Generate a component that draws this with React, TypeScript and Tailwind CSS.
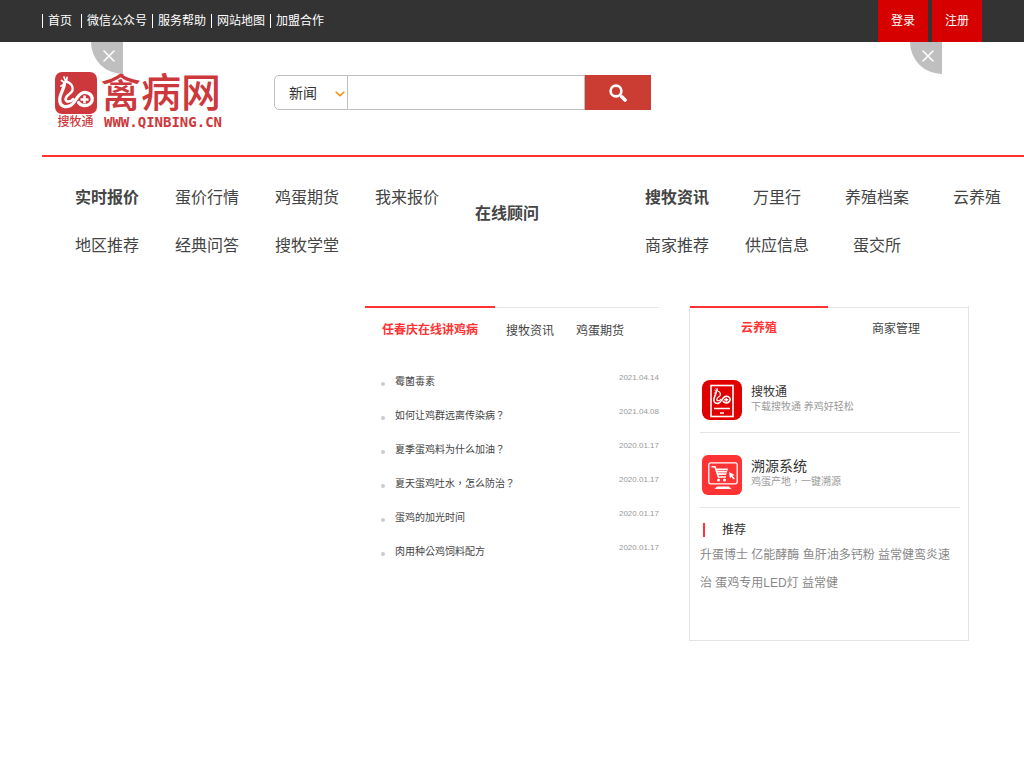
import React, { useState } from 'react'

const topLinks: string[] = ["首页", "微信公众号", "服务帮助", "网站地图", "加盟合作"]

const leftNav: string[] = ["实时报价", "蛋价行情", "鸡蛋期货", "我来报价", "地区推荐", "经典问答", "搜牧学堂"]
const rightNav: string[] = ["搜牧资讯", "万里行", "养殖档案", "云养殖", "商家推荐", "供应信息", "蛋交所"]

const newsTabs: string[] = ["任春庆在线讲鸡病", "搜牧资讯", "鸡蛋期货"]

const news = [
    { title: "霉菌毒素", date: "2021.04.14" },
    { title: "如何让鸡群远离传染病？", date: "2021.04.08" },
    { title: "夏季蛋鸡料为什么加油？", date: "2020.01.17" },
    { title: "夏天蛋鸡吐水，怎么防治？", date: "2020.01.17" },
    { title: "蛋鸡的加光时间", date: "2020.01.17" },
    { title: "肉用种公鸡饲料配方", date: "2020.01.17" },
]

// rooster whose tail curls into a ring with a medical cross
const Rooster = () => (
    <g fill="none" stroke="currentColor" strokeLinecap="round" strokeLinejoin="round">
        <path strokeWidth="3.2" d="M9.5 11C9.500 17 4.500 22 4.700 28C4.700 34 10 36 15 33.800C20 31.500 21 25 25.500 22C30 18.800 36.500 21 37.200 26C37.800 31 33 34.500 28 33.500C26 33 24.500 32 23.500 30.500" />
        <path strokeWidth="2.400" d="M11 9.500C16 10.500 18.500 14.500 17.500 18.500C16 22.500 10.500 22.500 10.500 27.500C11.500 30.500 16 30 18 27" />
        <path strokeWidth="1.800" d="M9 5L10.500 9M6.500 8.500L9.500 10.500M6 14L9 12.500M12 5.500L11.500 9.500" />
        <path strokeWidth="2.600" strokeLinecap="butt" d="M29.500 23.500V31.500M25.500 27.500H33.500" />
    </g>
)

const Logo = () => (
    <a href="#" aria-label="禽病网" className="flex gap-1 text-[#cd383d]">
        <span className="flex w-[43px] flex-col items-center">
            <svg viewBox="0 0 42 42" className="size-[42px]">
                <rect width="42" height="42" rx="7" fill="currentColor" />
                <g className="text-white"><Rooster /></g>
            </svg>
            <span className="text-xs font-medium leading-4">搜牧通</span>
        </span>
        <span className="flex w-[124px] flex-col">
            <span className="text-[40px] font-medium leading-[42px]">禽病网</span>
            <span className="pl-[3px] font-['DejaVu_Sans_Mono',monospace] text-sm font-bold leading-4">WWW.QINBING.CN</span>
        </span>
    </a>
)

const CloseCorner = ({ className }: { className: string }) => (
    <button aria-label="关闭" className={`absolute top-[42px] flex size-8 justify-center rounded-bl-full bg-[#bfbfbf] pt-2 pl-1 ${className}`}>
        <svg viewBox="0 0 12 12" className="size-3" stroke="white" strokeWidth="1.600" strokeLinecap="round">
            <path d="M1 1L11 11M11 1L1 11" />
        </svg>
    </button>
)

const NavGroup = ({ items }: { items: string[] }) => (
    <ul className="grid shrink-0 grid-cols-[repeat(4,100px)] text-center leading-[48px]">
        {items.map((item, i) => (
            <li key={item}><a href="#" className={i === 0 ? "font-bold" : ""}>{item}</a></li>
        ))}
    </ul>
)

const App = () => {

    const [newsTab, setNewsTab] = useState(0)
    const [sideTab, setSideTab] = useState(0)

    return (
        <main className="relative min-h-screen overflow-x-hidden bg-white font-['Liberation_Sans','Noto_Sans_CJK_SC',sans-serif] text-[#444]">
            <div className="flex h-[42px] justify-between bg-[#333] px-[42px] text-xs text-white">
                <ul className="flex items-center">
                    {topLinks.map((link, i) => (
                        <li key={link} className={`border-l border-white leading-[14px] ${i === 0 ? "pl-[5px] pr-[9px]" : "px-[5px]"}`}>
                            <a href="#">{link}</a>
                        </li>
                    ))}
                </ul>
                <div className="flex gap-1 leading-[42px]">
                    <a href="#" className="w-[50px] bg-[#d70000] text-center">登录</a>
                    <a href="#" className="w-[50px] bg-[#d70000] text-center">注册</a>
                </div>
            </div>

            <CloseCorner className="left-[91px]" />
            <CloseCorner className="right-[82px]" />

            <header className="ml-[42px] flex h-[115px] items-start border-b-2 border-[#f33] pl-3 pt-[30px]">
                <Logo />
                <form className="ml-[49px] mt-[3px] flex h-[35px]">
                    <label className="relative flex">
                        <select aria-label="分类" className="w-[74px] appearance-none rounded-l-[5px] border border-[#bfbfbf] bg-white pl-[14px] text-sm text-[#333]">
                            <option>新闻</option>
                            <option>问答</option>
                        </select>
                        <svg viewBox="0 0 10 6" className="pointer-events-none absolute right-[3px] top-4 h-[6px] w-[10px]" fill="none" stroke="#f80" strokeWidth="1.500">
                            <path d="M0.700 0.700L5 4.800L9.300 0.700" />
                        </svg>
                    </label>
                    <input type="text" aria-label="搜索" className="w-[237px] border-y border-r border-[#bfbfbf] px-2 text-sm outline-none" />
                    <button type="button" aria-label="搜索" className="flex w-[66px] items-center justify-center bg-[#cb3d33]">
                        <svg viewBox="0 0 18 18" className="size-[18px]" fill="none" stroke="white" strokeLinecap="round">
                            <circle cx="7" cy="7" r="5.400" strokeWidth="2.600" />
                            <path d="M12.800 12.800L16 16" strokeWidth="3.600" />
                        </svg>
                    </button>
                </form>
            </header>

            <nav className="ml-[57px] mt-[17px] flex">
                <NavGroup items={leftNav} />
                <a href="#" className="mr-[70px] w-[100px] shrink-0 pt-4 text-center font-bold leading-[48px]">在线顾问</a>
                <NavGroup items={rightNav} />
            </nav>

            <div className="mt-9 flex items-start justify-end gap-[30px] pr-[55px]">
                <section className="w-[294px]">
                    <div className="flex text-xs">
                        {newsTabs.map((tab, i) => (
                            <button
                                key={tab}
                                onClick={() => setNewsTab(i)}
                                className={`h-[46px] ${i === 0 ? "w-[130px]" : i === 1 ? "w-[70px]" : "w-[94px] pr-6"} ${newsTab === i ? "border-t-2 border-[#f33] font-bold text-[#f33]" : "mt-px border-t border-[#e3e3e3]"}`}
                            >
                                {tab}
                            </button>
                        ))}
                    </div>
                    <ul className="mt-[10px] pl-4">
                        {news.map((item) => (
                            <li key={item.title} className="flex h-[34px] items-center text-[10px]">
                                <span className="mr-[10px] mt-2 size-1 rounded-full bg-[#ccc]"></span>
                                <a href="#" className="font-['Noto_Sans_CJK_TC',sans-serif]">{item.title}</a>
                                <span className="mb-1 ml-auto text-[8px] text-[#999]">{item.date}</span>
                            </li>
                        ))}
                    </ul>
                </section>

                <section className="w-[280px] border-x border-b border-[#e3e3e3] pb-[43px]">
                    <div className="flex text-xs">
                        {["云养殖", "商家管理"].map((tab, i) => (
                            <button
                                key={tab}
                                onClick={() => setSideTab(i)}
                                className={`h-[42px] ${i === 0 ? "w-[138px]" : "flex-1 pr-1"} ${sideTab === i ? "border-t-2 border-[#f33] font-bold text-[#f33]" : "mt-px border-t border-[#e3e3e3]"}`}
                            >
                                {tab}
                            </button>
                        ))}
                    </div>

                    <div className="pl-[10px] pr-2">
                        <a href="#" className="mt-[31px] flex gap-[9px] border-b border-[#e3e3e3] pb-3 pl-[2px]">
                            <svg viewBox="0 0 40 40" className="size-10 text-white">
                                <rect width="40" height="40" rx="8" fill="#e10000" />
                                <rect x="9" y="5.500" width="22" height="31" fill="none" stroke="currentColor" strokeWidth="1.600" />
                                <g transform="translate(9.500 6) scale(0.500)"><Rooster /></g>
                                <path d="M12 28.500H28M18 33H22" stroke="currentColor" strokeWidth="1.600" />
                            </svg>
                            <span className="flex flex-col pt-1">
                                <span className="text-xs leading-4 text-[#333]">搜牧通</span>
                                <span className="text-[10px] leading-[14px] text-[#999]">下载搜牧通 养鸡好轻松</span>
                            </span>
                        </a>
                        <a href="#" className="mt-[22px] flex gap-[9px] border-b border-[#e3e3e3] pb-3 pl-[2px]">
                            <svg viewBox="0 0 40 40" className="size-10">
                                <rect width="40" height="40" rx="6" fill="#f33" />
                                <rect x="6.800" y="7.800" width="28.400" height="21" rx="2" fill="none" stroke="white" strokeWidth="1.300" />
                                <path d="M15 31.500H27L29.500 34H12.500Z" fill="white" />
                                <path d="M9.500 11.800H13L16.500 22H24" fill="none" stroke="white" strokeWidth="1.600" />
                                <path d="M13.500 13.500H26L24 20H16Z" fill="white" />
                                <path d="M15.500 15.500H25M16 17.800H24.500" stroke="#f33" strokeWidth="0.700" />
                                <circle cx="16.500" cy="25" r="1.500" fill="white" />
                                <circle cx="22.500" cy="25" r="1.500" fill="white" />
                                <path d="M27 17L32.500 20L30.500 20.800L32.800 23.500L31.500 24.500L29.300 21.800L28 23.500Z" fill="white" />
                            </svg>
                            <span className="flex flex-col pt-[3px]">
                                <span className="text-sm leading-4 text-[#333]">溯源系统</span>
                                <span className="font-['Noto_Sans_CJK_TC',sans-serif] text-[10px] leading-[14px] text-[#999]">鸡蛋产地，一键溯源</span>
                            </span>
                        </a>
                        <h2 className="ml-[3px] mt-[15px] border-l-2 border-[#f33] pl-[17px] text-xs leading-[14px] text-[#333]">推荐</h2>
                        <p className="mt-1 text-xs leading-7 text-[#888]">
                            升蛋博士 亿能酵酶 鱼肝油多钙粉 益常健鸾炎速治 蛋鸡专用LED灯 益常健
                        </p>
                    </div>
                </section>
            </div>
        </main>
    )
}

export default App
